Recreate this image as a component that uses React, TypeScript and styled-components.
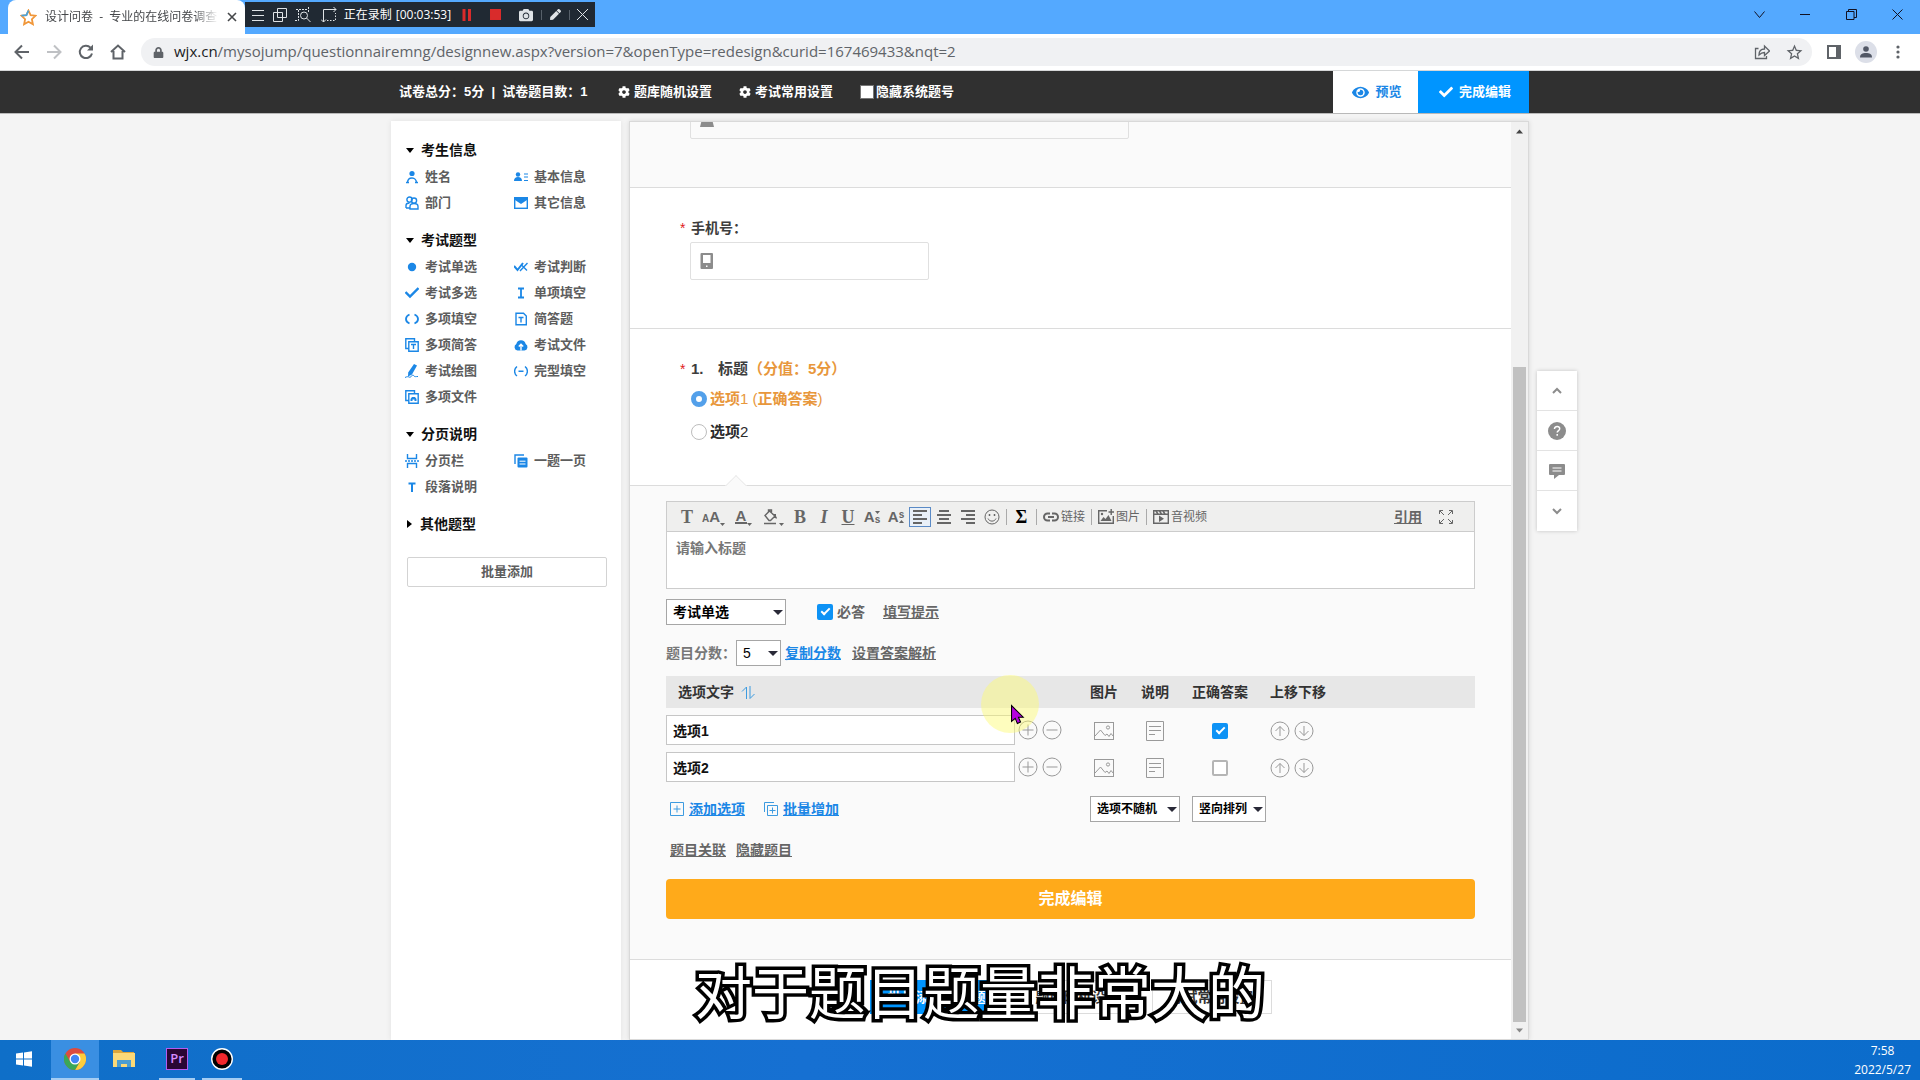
import React from "react";
import styled, { createGlobalStyle, css } from "styled-components";
import { FaCog, FaEye, FaCheck, FaCamera, FaLock, FaPen } from "react-icons/fa";
import { MdStarBorder } from "react-icons/md";

const CJK = `"Liberation Sans", "Noto Sans CJK SC", sans-serif`;
const UI = `"Open Sans", "Noto Sans CJK SC", sans-serif`;
const BLUE = "#1b87e6";

const Global = createGlobalStyle`
  *, *::before, *::after { box-sizing: border-box; }
  body { margin: 0; font: 14px/20px ${CJK}; color: #333; background: #f4f4f4; }
  button, input, select, textarea { font: inherit; color: inherit; margin: 0; }
  button { border: 0; background: none; padding: 0; cursor: pointer; }
  a { color: inherit; }
  svg { display: block; flex: none; }
`;

const Screen = styled.div`
  position: relative;
  display: flex;
  flex-direction: column;
  height: 100vh;
  overflow: hidden;
`;

/* ---------- browser frame ---------- */

const TabStrip = styled.header`
  display: flex;
  align-items: flex-start;
  height: 34px;
  padding-left: 8px;
  background: #54a9ff;
  font: 12px/16px ${UI};
`;
const Tab = styled.div`
  display: flex;
  align-items: center;
  gap: 8px;
  width: 237px;
  height: 34px;
  padding: 0 8px 0 12px;
  background: #fff;
  border-radius: 8px 8px 0 0;
  color: #45474a;
`;
const TabTitle = styled.span`
  flex: 1;
  overflow: hidden;
  white-space: pre;
  mask-image: linear-gradient(90deg, #000 85%, transparent);
`;
const IconButton = styled.button<{ $w?: number }>`
  display: flex;
  align-items: center;
  justify-content: center;
  width: ${(p) => p.$w ?? 32}px;
  height: 100%;
`;
const Recorder = styled.div`
  display: flex;
  align-items: center;
  width: 350px;
  height: 25px;
  margin-top: 2px;
  padding-left: 1px;
  background: #202933;
  color: #dfe3e6;
`;
const RecTime = styled.span`
  display: flex;
  gap: 4px;
  width: 112px;
  padding-left: 2px;
  white-space: nowrap;
  color: #fff;
`;
const RecSep = styled.i`
  width: 1px;
  height: 10px;
  background: #57606a;
`;
const WindowButtons = styled.div`
  display: flex;
  height: 28px;
  margin-left: auto;
`;
const AddressRow = styled.div`
  display: flex;
  align-items: center;
  height: 37px;
  padding: 0 6px;
  background: #fff;
  border-bottom: 1px solid #d5d7d8;
  color: #5f6368;
`;
const Pill = styled.div`
  display: flex;
  align-items: center;
  flex: 1;
  height: 28px;
  margin: 0 6px 0 7px;
  padding: 0 2px 0 12px;
  border-radius: 14px;
  background: #f0f1f3;
`;
const Url = styled.span`
  flex: 1;
  margin-left: 10px;
  padding-bottom: 2px;
  font: 15px/20px ${UI};
  color: #606469;
  b { font-weight: 400; color: #202124; }
`;
const Avatar = styled.span`
  display: flex;
  align-items: center;
  justify-content: center;
  width: 22px;
  height: 22px;
  border-radius: 50%;
  background: #dcdfe8;
`;

/* ---------- site header ---------- */

const Columns = styled.div`
  display: grid;
  grid-template-columns: 1fr minmax(0, 1138px) 1fr;
`;
const DarkBar = styled(Columns)`
  height: 43px;
  background: #303030;
  border-bottom: 1px solid #b9b9b9;
  color: #fff;
  font-size: 13px;
  font-weight: 700;
`;
const DarkInner = styled.div`
  grid-column: 2;
  display: flex;
  align-items: center;
  padding-left: 8px;
  white-space: nowrap;
`;
const Score = styled.span`
  width: 219px;
`;
const BarButton = styled.button`
  display: flex;
  align-items: center;
  gap: 4px;
  width: 121px;
`;
const HideNumber = styled.label`
  display: flex;
  align-items: center;
  gap: 2px;
  input {
    appearance: none;
    width: 14px;
    height: 14px;
    border: 1px solid #767676;
    background: #fff;
  }
`;
const BarAction = styled.button<{ $primary?: boolean }>`
  display: flex;
  align-items: center;
  justify-content: center;
  gap: 6px;
  align-self: stretch;
  width: ${(p) => (p.$primary ? 111 : 85)}px;
  padding-left: 3px;
  margin-left: ${(p) => (p.$primary ? 0 : "auto")};
  background: ${(p) => (p.$primary ? "#0095ff" : "#fff")};
  color: ${(p) => (p.$primary ? "#fff" : BLUE)};
`;

/* ---------- workspace ---------- */

const Workspace = styled(Columns)`
  flex: 1;
  min-height: 0;
  padding-top: 7px;
`;
const Center = styled.div`
  grid-column: 2;
  display: flex;
  gap: 8px;
  min-height: 0;
`;
const Sidebar = styled.aside`
  width: 230px;
  padding: 15px 14px;
  background: #fff;
  box-shadow: 0 0 6px rgba(0, 0, 0, 0.08);
  font-weight: 700;
`;
const Group = styled.section`
  margin-bottom: 10px;
`;
const GroupTitle = styled.h3<{ $closed?: boolean }>`
  display: flex;
  align-items: center;
  gap: 6px;
  margin: 0;
  font-size: 14px;
  line-height: 28px;
  color: #111;
  &::before {
    content: "";
    margin: 0 1px;
    border: 4px solid transparent;
    ${(p) =>
      p.$closed
        ? css`border-left: 5px solid #000; border-right: 0; margin: 0 2px;`
        : css`border-top: 5px solid #000; border-bottom: 0;`}
  }
`;
const ItemGrid = styled.div`
  display: grid;
  grid-template-columns: 109px 1fr;
`;
const Item = styled.button`
  display: flex;
  align-items: center;
  gap: 6px;
  font-size: 13px;
  line-height: 26px;
  color: #5d5d5d;
`;
const BatchButton = styled.button`
  width: 200px;
  height: 30px;
  margin: 9px 0 0 2px;
  border: 1px solid #d3d3d3;
  border-radius: 2px;
  background: #fff;
  font-size: 13px;
  color: #5d5d5d;
`;

const Pane = styled.main`
  display: flex;
  flex: 1;
  min-width: 0;
  border: 1px solid #d9d9d9;
  box-shadow: 0 0 5px rgba(0, 0, 0, 0.12);
  background: #fff;
`;
const PaneBody = styled.div`
  display: flex;
  flex-direction: column;
  flex: 1;
  min-width: 0;
  overflow: hidden;
`;
const Scrollbar = styled.div`
  display: flex;
  flex-direction: column;
  align-items: center;
  width: 17px;
  padding: 6px 0 5px;
  background: #f1f1f1;
`;
const Thumb = styled.div`
  width: 13px;
  height: 655px;
  margin: auto 0 5px;
  background: #c1c1c1;
`;

const Block = styled.section`
  position: relative;
  flex: none;
  padding: 30px 60px 48px;
  border-bottom: 1px solid #dcdcdc;
`;
const CutBlock = styled(Block)`
  display: flex;
  align-items: flex-end;
  height: 66px;
  padding-top: 0;
  overflow: hidden;
  background: #fafafa;
`;
const QuestionBlock = styled(Block)`
  padding-bottom: 37px;
  &::after {
    content: "";
    position: absolute;
    left: 98px;
    bottom: -9px;
    width: 16px;
    height: 16px;
    border: 1px solid #e8e8e8;
    border-right: 0;
    border-bottom: 0;
    background: #fafafa;
    transform: rotate(45deg);
    clip-path: polygon(0 0, 100% 0, 0 100%);
  }
`;
const QTitle = styled.label`
  display: flex;
  margin-left: -10px;
  font-weight: 700;
  line-height: 20px;
  color: #3d3d3d;
`;
const QHeading = styled(QTitle)`
  font-size: 15px;
`;
const Star = styled.span`
  width: 11px;
  font-size: 14px;
  font-weight: 400;
  color: #e02020;
`;
const Num = styled.span`
  width: 27px;
`;
const Points = styled.span`
  color: #e8973c;
`;
const Field = styled.div<{ $w: number }>`
  display: flex;
  flex: none;
  align-items: center;
  width: ${(p) => p.$w}px;
  height: 38px;
  padding-left: 8px;
  border: 1px solid #e0e0e0;
  border-radius: 2px;
  input { flex: 1; min-width: 0; border: 0; outline: 0; background: none; }
`;
const PhoneField = styled(Field)`
  margin-top: 4px;
`;
const OptionList = styled.div`
  margin: 3px 0 0 1px;
`;
const Option = styled.label<{ $right?: boolean }>`
  display: flex;
  align-items: center;
  gap: 3px;
  height: 33px;
  font-size: 15px;
  font-weight: 700;
  white-space: pre;
  color: ${(p) => (p.$right ? "#e8973c" : "#2b2b2b")};
  i { font-style: normal; font-weight: 400; }
  input {
    appearance: none;
    width: 16px;
    height: 16px;
    border-radius: 50%;
    border: 1px solid #bdbdbd;
    background: #fff;
  }
  input:checked { border: 5px solid #53a0ea; }
`;

/* ---------- question editor ---------- */

const Editor = styled(Block)`
  display: flex;
  flex-direction: column;
  padding: 15px 36px 40px;
  background: #fafafa;
`;
const RichText = styled.div`
  border: 1px solid #ccc;
  background: #fff;
`;
const Tools = styled.div`
  display: flex;
  align-items: center;
  height: 30px;
  padding-left: 8px;
  background: #efefee;
  border-bottom: 1px solid #ccc;
  font-size: 12px;
  color: #666;
`;
const Tool = styled.button<{ $w?: number; $on?: boolean }>`
  display: flex;
  align-items: center;
  justify-content: center;
  width: ${(p) => p.$w ?? 24}px;
  height: 20px;
  ${(p) => p.$on && css`width: 22px; margin: 0 1px; border: 1px solid #5a8ac6; background: #e9f0f8;`}
`;
const Serif = styled.span<{ $italic?: boolean; $under?: boolean; $dark?: boolean }>`
  font: 700 18px/18px "Liberation Serif", serif;
  font-style: ${(p) => (p.$italic ? "italic" : "normal")};
  text-decoration: ${(p) => (p.$under ? "underline" : "none")};
  color: ${(p) => (p.$dark ? "#000" : "#666")};
`;
const ColorLetter = styled.span`
  width: 12px;
  border-bottom: 2px solid #666;
  font: 700 15px/13px "Liberation Sans", sans-serif;
  text-align: center;
`;
const Big = styled.span`
  font: 700 15px/18px "Liberation Sans", sans-serif;
`;
const Small = styled.span`
  font: 700 10px/9px "Liberation Sans", sans-serif;
`;
const SmallStack = styled.span<{ $up?: boolean }>`
  display: flex;
  flex-direction: ${(p) => (p.$up ? "column-reverse" : "column")};
  align-items: center;
`;
const BaseLetters = styled.span`
  display: flex;
  align-items: baseline;
`;
const ToolLabel = styled.button`
  display: flex;
  align-items: center;
  gap: 2px;
  padding: 0 4px;
  white-space: nowrap;
`;
const Sep = styled.i`
  width: 1px;
  height: 16px;
  margin: 0 2px;
  background: #aaa;
`;
const Quote = styled.a`
  margin: 0 12px 0 auto;
  font-size: 14px;
  font-weight: 700;
  text-decoration: underline;
`;
const TitleArea = styled.textarea`
  display: block;
  width: 100%;
  height: 56px;
  padding: 6px 9px;
  border: 0;
  outline: 0;
  resize: none;
  font-weight: 700;
  &::placeholder { color: #777; opacity: 1; }
`;
const Row = styled.div<{ $top: number; $h: number }>`
  display: flex;
  align-items: center;
  height: ${(p) => p.$h}px;
  margin-top: ${(p) => p.$top}px;
  color: #666;
  white-space: nowrap;
`;
const SelectBox = styled.span<{ $w: number; $small?: boolean }>`
  position: relative;
  display: inline-block;
  width: ${(p) => p.$w}px;
  font-size: ${(p) => (p.$small ? 12 : 14)}px;
  color: #000;
  select {
    appearance: none;
    width: 100%;
    height: 26px;
    padding: 0 6px;
    border: 1px solid #a6a6a6;
    border-radius: 0;
    background: #fff;
    font-weight: 700;
  }
  &::after {
    content: "";
    position: absolute;
    right: 3px;
    top: 11px;
    border: 5px solid transparent;
    border-top-color: #2a2a38;
    border-bottom: 0;
    pointer-events: none;
  }
`;
const ScoreSelect = styled(SelectBox)`
  margin-right: 4px;
  select { font-weight: 400; }
`;
const Tick = styled.input.attrs({ type: "checkbox" })`
  appearance: none;
  display: inline-flex;
  align-items: center;
  justify-content: center;
  width: 16px;
  height: 16px;
  border: 2px solid #b5b5b5;
  border-radius: 2px;
  background: #fff;
  &:checked { border-color: #0d92f5; background: #0d92f5; }
  &:checked::after {
    content: "";
    width: 9px;
    height: 5px;
    margin-bottom: 3px;
    border: solid #fff;
    border-width: 0 0 2px 2px;
    transform: rotate(-45deg);
  }
`;
const Required = styled.label`
  display: flex;
  align-items: center;
  gap: 4px;
  margin: 0 18px 0 31px;
  font-weight: 700;
`;
const Link = styled.a<{ $blue?: boolean }>`
  font-weight: 700;
  text-decoration: underline;
  color: ${(p) => (p.$blue ? BLUE : "#666")};
`;
const PlainLabel = styled.label`
  font-weight: 700;
  color: #777;
`;
const Table = styled.table`
  width: 100%;
  margin-top: 10px;
  border-collapse: collapse;
  table-layout: fixed;
  th {
    height: 32px;
    padding: 0;
    background: #e7e7e7;
    text-align: center;
    color: #333;
    white-space: nowrap;
  }
  th:first-child { padding-left: 12px; }
  th:first-child, th:last-child, td:last-child { text-align: left; }
  th:last-child, td:last-child { padding-left: 11px; }
  td { height: 37px; padding: 8px 0 0; }
  td:first-child { padding-top: 7px; }
`;
const Col = styled.col<{ $w?: number }>`
  width: ${(p) => (p.$w ? p.$w + "px" : "auto")};
`;
const Flex = styled.div<{ $gap: number; $center?: boolean }>`
  display: flex;
  align-items: center;
  gap: ${(p) => p.$gap}px;
  justify-content: ${(p) => (p.$center ? "center" : "flex-start")};
  color: #999;
`;
const HeadText = styled(Flex)`
  color: #333;
`;
const OptionInput = styled.input`
  width: 349px;
  height: 30px;
  padding: 0 6px;
  border: 1px solid #c6c6c6;
  background: #fff;
  font-weight: 700;
  color: #111;
`;
const AddLink = styled(Link)`
  display: flex;
  align-items: center;
  gap: 5px;
  margin: 0 15px 0 4px;
`;
const Arrange = styled.div`
  display: flex;
  gap: 12px;
  margin: 0 209px 0 auto;
`;
const DoneButton = styled.button`
  height: 40px;
  margin-top: 18px;
  border-radius: 4px;
  background: #ffaa1a;
  font-size: 16px;
  font-weight: 700;
  color: #fff;
`;
const Footer = styled.div`
  display: flex;
  justify-content: center;
  gap: 14px;
  padding-top: 20px;
`;
const FooterButton = styled.button<{ $primary?: boolean }>`
  height: 34px;
  padding: 0 17px;
  border: 1px solid ${(p) => (p.$primary ? "#0095ff" : "#dcdcdc")};
  background: ${(p) => (p.$primary ? "#0095ff" : "#fff")};
  font-weight: 700;
  color: ${(p) => (p.$primary ? "#fff" : "#333")};
`;

const SideTools = styled.nav`
  display: flex;
  flex-direction: column;
  align-self: start;
  width: 40px;
  margin: 250px 0 0 8px;
  background: #fff;
  box-shadow: 0 0 4px rgba(0, 0, 0, 0.2);
  button {
    display: flex;
    align-items: center;
    justify-content: center;
    height: 40px;
    border-bottom: 1px solid #e3e3e3;
    color: #8c8c8c;
  }
  button:last-child { border-bottom: 0; }
`;

/* ---------- taskbar and overlays ---------- */

const Taskbar = styled.footer`
  display: flex;
  height: 40px;
  padding-left: 1px;
  background: linear-gradient(90deg, #0f6fc8, #1670d2 42%, #0b6ccb);
`;
const Task = styled.button<{ $w: number; $line?: boolean; $active?: boolean }>`
  display: flex;
  align-items: center;
  justify-content: center;
  width: ${(p) => p.$w}px;
  background: ${(p) => (p.$active ? "#3a8fe2" : "none")};
  border-bottom: 2px solid ${(p) => (p.$line ? "#a5cdf3" : "transparent")};
`;
const Space = styled.span<{ $w: number }>`
  width: ${(p) => p.$w}px;
`;
const Premiere = styled.span`
  width: 22px;
  height: 22px;
  border: 1px solid #b45cf0;
  background: #2a0634;
  font: 600 13px/19px "Open Sans", sans-serif;
  text-align: center;
  color: #d58cff;
`;
const Clock = styled.time`
  margin-left: auto;
  padding: 1px 9px 0 0;
  font: 12px/19px ${UI};
  text-align: center;
  color: #fff;
`;
const Caption = styled.p`
  position: absolute;
  left: 40px;
  right: 0;
  bottom: 51px;
  margin: 0;
  font: 400 57px/80px "Noto Sans CJK SC", sans-serif;
  text-align: center;
  white-space: nowrap;
  color: #fff;
  -webkit-text-stroke: 7px #000;
  paint-order: stroke fill;
  stroke-linejoin: round;
  pointer-events: none;
`;
const Pointer = styled.div`
  position: absolute;
  left: calc(50% + 21px);
  top: 675px;
  width: 58px;
  height: 58px;
  padding: 30px 0 0 30px;
  border-radius: 50%;
  background: rgba(252, 250, 110, 0.45);
  pointer-events: none;
  svg { overflow: visible; }
`;

/* ---------- drawings ---------- */

type IcProps = { size?: number; sw?: number; color?: string; box?: number; children: React.ReactNode };
const Ic = ({ size = 16, sw = 1, color = "currentColor", box = 16, children }: IcProps) => (
  <svg width={size} height={size} viewBox={`0 0 ${box} ${box}`} fill="none" stroke={color} strokeWidth={sw}>
    {children}
  </svg>
);
const S = ({ children }: { children: React.ReactNode }) => (
  <Ic size={14} box={14} sw={1.4} color={BLUE}>{children}</Ic>
);

const icons: Record<string, React.ReactNode> = {
  name: <S><circle cx="7" cy="3.5" r="2.6" fill={BLUE} stroke="none" /><path d="M2.500 13c0-3 1.800-5 4.500-5s4.500 2 4.500 5M1 12.500h3M10 12.500h3" /></S>,
  dept: <S><circle cx="4.5" cy="3.6" r="2.6" /><circle cx="9" cy="4.600" r="2.600" /><path d="M1 12V9.500C1 8 2.500 7 4.500 7M5 13v-2.500c0-2 1.500-3 4-3s4 1 4 3V13zM1 12h4" /></S>,
  basic: <S><circle cx="4" cy="4.500" r="2.200" fill={BLUE} stroke="none" /><path d="M0 11c0-2.500 1.500-4 4-4s4 1.500 4 4z" fill={BLUE} stroke="none" /><path d="M10 4h4M10 7h4M10 10.500h4" strokeWidth="1" /></S>,
  mail: <S><rect x=".7" y="1.700" width="12.600" height="10.600" /><path d="M1 2h12v2L7 8 1 4z" fill={BLUE} stroke="none" /></S>,
  dot: <S><circle cx="7" cy="7" r="4.200" fill={BLUE} stroke="none" /></S>,
  judge: <S><path d="M0 6l3.500 4L9 3" strokeWidth="2" /><path d="M6 11l7.500-8M7.500 5l5.500 5.500" strokeWidth="1.400" /></S>,
  check: <S><path d="M.5 6L5 10.500 13.500 2" strokeWidth="2.400" /></S>,
  caret: <S><path d="M4 2.500h6M4 11.500h6M7 2.500v9" strokeWidth="1.800" /></S>,
  parens: <S><path d="M4.500 2.500C-.2 4.500-.2 9.500 4.500 11.500M9.500 2.500C14.200 4.500 14.200 9.500 9.500 11.500" strokeWidth="1.800" /></S>,
  page: <S><path d="M2 1.200h7.500L12.300 4v8.800H2z" /><path d="M4.500 5.500h5M7 5.500v5" /></S>,
  pages: <S><path d="M3.500 10.500H.8V.8h8.700v2.500M3.800 3.800h9.400v9.400H3.800z" /><path d="M6 6.500h5M8.500 6.500v4.500" /></S>,
  cloud: <S><path d="M3.500 12.500A3.500 3.500 0 0 1 2.300 6a4.800 4.800 0 0 1 9.400 0 3.500 3.500 0 0 1-1.200 6.500z" fill={BLUE} stroke="none" /><path d="M7 12.500V7M4.800 8.500L7 6.300l2.200 2.200" stroke="#fff" /></S>,
  draw: <S><path d="M9 0l3 1.500L7 10.500 3 12.500 3.200 8.500z" fill={BLUE} stroke="none" /><path d="M0 13.500c2-1 3-1 4-.5s1.500.5 2.500-1 2-1 2.500 0 2 .5 4 .5" strokeWidth="1" /></S>,
  cloze: <S><path d="M3 2.500C-.2 5-.2 9.500 3 12M11 2.500C14.200 5 14.200 9.500 11 12M4.500 7.200h5" /></S>,
  files: <S><path d="M3.500 10.500H.8V.8h8.700v2.500M3.800 3.800h9.400v9.400H3.800z" /><path d="M5.500 11V9l1.500-2h3l1.500 2v2h-2V9.500h-2V11z" fill={BLUE} stroke="none" /></S>,
  break: <S><path d="M2.500 0v4.500h9V0M2.500 14V9.500h9V14" /><path d="M0 7h14" strokeDasharray="2 1" /></S>,
  single: <S><path d="M1 10V1h9" /><rect x="3.500" y="3.500" width="10" height="10" rx="1" fill={BLUE} stroke="none" /><path d="M5.500 7.200h6M5.500 10h6" stroke="#fff" strokeWidth="1" /></S>,
  text: <S><path d="M3.500 3.500h7M7 3.500V12" strokeWidth="2" /></S>,
};

const groups = [
  { title: "考生信息", items: [["name", "姓名"], ["basic", "基本信息"], ["dept", "部门"], ["mail", "其它信息"]] },
  {
    title: "考试题型",
    items: [
      ["dot", "考试单选"], ["judge", "考试判断"], ["check", "考试多选"], ["caret", "单项填空"],
      ["parens", "多项填空"], ["page", "简答题"], ["pages", "多项简答"], ["cloud", "考试文件"],
      ["draw", "考试绘图"], ["cloze", "完型填空"], ["files", "多项文件"],
    ],
  },
  { title: "分页说明", items: [["break", "分页栏"], ["single", "一题一页"], ["text", "段落说明"]] },
];

const Circle = ({ d, label }: { d: string; label: string }) => (
  <button aria-label={label}>
    <Ic size={20} box={20}><circle cx="10" cy="10" r="9" /><path d={d} /></Ic>
  </button>
);
const Caret = ({ up }: { up?: boolean }) => (
  <Ic size={5} box={5}><path d={up ? "M0 4h5L2.500 1z" : "M0 1h5L2.500 4z"} fill="currentColor" stroke="none" /></Ic>
);
const LowCaret = styled.span`
  align-self: flex-end;
`;
const Lines = ({ d }: { d: string }) => <Ic sw={2}><path d={d} /></Ic>;

const OptionRow = ({ text, right }: { text: string; right?: boolean }) => (
  <tr>
    <td>
      <Flex $gap={3}>
        <OptionInput aria-label="选项文字" defaultValue={text} />
        <Flex $gap={4}>
          <Circle label="添加" d="M4.500 10h11M10 4.500v11" />
          <Circle label="删除" d="M4.500 10h11" />
        </Flex>
      </Flex>
    </td>
    <td>
      <Flex $gap={0} $center>
        <button aria-label="图片">
          <Ic size={20} box={20}><rect x=".5" y="1.500" width="19" height="17" /><path d="M1 15l5.500-6 4.500 5.500 2-1.500 2 2.500 2-3 2.500 3" /><circle cx="14" cy="6.500" r="1.600" /></Ic>
        </button>
      </Flex>
    </td>
    <td>
      <Flex $gap={0} $center>
        <button aria-label="说明">
          <Ic size={20} box={20}><path d="M1.500.5h17v19h-17zM4 5.500h12M4 9.500h12M4 13.500h6" /></Ic>
        </button>
      </Flex>
    </td>
    <td>
      <Flex $gap={0} $center><Tick aria-label="正确答案" defaultChecked={right} /></Flex>
    </td>
    <td>
      <Flex $gap={4}>
        <Circle label="上移" d="M10 15V5.500M5.500 10L10 5.500l4.500 4.500" />
        <Circle label="下移" d="M10 5v9.500M5.500 10l4.500 4.500 4.500-4.500" />
      </Flex>
    </td>
  </tr>
);

const BrowserFrame = () => (
  <>
    <TabStrip>
      <Tab>
        <Ic size={17} box={17} sw={1.8} color="#f0973a">
          <path d="M8.500 1.500l2.100 4.600 5 .6-3.700 3.500 1 5-4.400-2.500-4.400 2.500 1-5L1.400 6.700l5-.6z" />
          <path d="M8.500 1.500L6.400 6.100l-5 .6" stroke="#4aa3dc" />
        </Ic>
        <TabTitle>{"设计问卷  -  专业的在线问卷调查"}</TabTitle>
        <IconButton $w={10} aria-label="关闭标签页"><Ic size={10} box={10} sw={1.6}><path d="M1 1l8 8M9 1L1 9" /></Ic></IconButton>
      </Tab>
      <Recorder>
        <IconButton $w={24} aria-label="菜单"><Ic size={12} box={12}><path d="M0 1.500h12M0 6.500h12M0 11.500h12" /></Ic></IconButton>
        <IconButton $w={21} aria-label="窗口"><Ic size={14} box={14}><path d="M4.500.5h9v9h-9zM.5 4.500h9v9h-9z" /></Ic></IconButton>
        <IconButton $w={25} aria-label="缩放"><Ic><path d="M1 2.500h12M3.500 3v10.500H0M13.500 0v5" strokeDasharray="2 1" /><circle cx="9" cy="8.500" r="3.500" /><path d="M11.500 11l4 4" /></Ic></IconButton>
        <IconButton $w={26} aria-label="区域"><Ic><path d="M2.500 15V2.500H15M0 12.500L2.500 15 5 12.500M12.500 0L15 2.500 12.500 5" /><path d="M6 13.500h8.500V6" strokeDasharray="1.500 1.500" /></Ic></IconButton>
        <RecTime><span>正在录制</span><span>[00:03:53]</span></RecTime>
        <IconButton $w={27} aria-label="暂停"><Ic size={12} box={12} sw={3} color="#d92b2b"><path d="M3 0v12M8.500 0v12" /></Ic></IconButton>
        <IconButton $w={30} aria-label="停止"><Ic size={11} box={11} color="#d92b2b"><path d="M0 0h11v11H0z" fill="#d92b2b" /></Ic></IconButton>
        <IconButton $w={31} aria-label="截图"><FaCamera size={14} /></IconButton>
        <RecSep />
        <IconButton $w={27} aria-label="画笔"><FaPen size={11} /></IconButton>
        <RecSep />
        <IconButton $w={25} aria-label="关闭"><Ic size={11} box={11}><path d="M0 0l11 11M11 0L0 11" /></Ic></IconButton>
      </Recorder>
      <WindowButtons>
        <IconButton $w={46} aria-label="搜索标签页"><Ic size={11} box={11} color="#112"><path d="M.5 2.500l5 6 5-6" /></Ic></IconButton>
        <IconButton $w={46} aria-label="最小化"><Ic size={10} box={10} color="#112"><path d="M0 5.500h10" /></Ic></IconButton>
        <IconButton $w={46} aria-label="还原"><Ic size={11} box={11} color="#112"><path d="M.5 2.500h7.500v8H.5zM2.500 2.500V.5h8v8H8" /></Ic></IconButton>
        <IconButton $w={46} aria-label="关闭窗口"><Ic size={11} box={11} color="#112"><path d="M.5.5l10 10M10.500.5l-10 10" /></Ic></IconButton>
      </WindowButtons>
    </TabStrip>
    <AddressRow>
      <IconButton aria-label="后退"><Ic sw={2}><path d="M15 8H2M8 1.500L1.500 8 8 14.500" /></Ic></IconButton>
      <IconButton aria-label="前进"><Ic sw={2} color="#bfc1c4"><path d="M1 8h13M8 1.500L14.500 8 8 14.500" /></Ic></IconButton>
      <IconButton aria-label="刷新"><Ic sw={2}><path d="M14 9.500A6.200 6.200 0 1 1 12.500 3.600" /><path d="M9 6.500h6v-6z" fill="currentColor" stroke="none" /></Ic></IconButton>
      <IconButton aria-label="主页"><Ic sw={2}><path d="M1 8l7-6.500L15 8M3.500 7v7.500h9V7" /></Ic></IconButton>
      <Pill>
        <FaLock size={11} />
        <Url><b>wjx.cn</b>/mysojump/questionnairemng/designnew.aspx?version=7&amp;openType=redesign&amp;curid=167469433&amp;nqt=2</Url>
        <IconButton aria-label="分享"><Ic sw={1.3}><path d="M4.500 4.500H1.500v10h11V12M5 11c0-4 2-6 5.500-6V2l5 5-5 4.500V8.500C8 8.500 6.500 9.500 5 11z" /></Ic></IconButton>
        <IconButton aria-label="收藏"><MdStarBorder size={19} /></IconButton>
      </Pill>
      <IconButton aria-label="侧边栏"><Ic size={14} box={14} sw={2}><path d="M1 1h12v12H1z" /><path d="M9 1h4v12H9z" fill="currentColor" stroke="none" /></Ic></IconButton>
      <IconButton aria-label="用户">
        <Avatar><Ic size={12} box={12}><circle cx="6" cy="3" r="2.800" fill="#525866" stroke="none" /><path d="M0 11.500C0 8 2.500 7 6 7s6 1 6 4.500z" fill="#525866" stroke="none" /></Ic></Avatar>
      </IconButton>
      <IconButton aria-label="更多"><Ic><g fill="currentColor" stroke="none"><circle cx="8" cy="3" r="1.600" /><circle cx="8" cy="8" r="1.600" /><circle cx="8" cy="13" r="1.600" /></g></Ic></IconButton>
    </AddressRow>
  </>
);

const ToolRow = () => (
  <Tools>
    <Tool aria-label="标题"><Serif>T</Serif></Tool>
    <Tool $w={29} aria-label="字号"><BaseLetters><Small>A</Small><Big>A</Big></BaseLetters><LowCaret><Caret /></LowCaret></Tool>
    <Tool $w={31} aria-label="文字颜色"><ColorLetter>A</ColorLetter><LowCaret><Caret /></LowCaret></Tool>
    <Tool $w={29} aria-label="背景颜色">
      <Ic sw={1.4}><path d="M5.500 4V1h3v3M2 6.500L6.500 2l5.500 5-4.500 4.500H6zM12 6.500l1.500 3M1 14.500h12" /><path d="M9 5h4v4l-1.500-2z" fill="currentColor" stroke="none" /></Ic>
      <LowCaret><Caret /></LowCaret>
    </Tool>
    <Tool aria-label="加粗"><Serif>B</Serif></Tool>
    <Tool aria-label="斜体"><Serif $italic>I</Serif></Tool>
    <Tool aria-label="下划线"><Serif $under>U</Serif></Tool>
    <Tool aria-label="减小字号"><Big>A</Big><SmallStack><Caret /><Small>s</Small></SmallStack></Tool>
    <Tool aria-label="增大字号"><Big>A</Big><SmallStack $up><Caret up /><Small>s</Small></SmallStack></Tool>
    <Tool $on aria-label="左对齐"><Lines d="M1 2h14M1 6h9M1 10h14M1 14h9" /></Tool>
    <Tool aria-label="居中"><Lines d="M3 2h10M1 6h14M3 10h10M1 14h14" /></Tool>
    <Tool aria-label="右对齐"><Lines d="M1 2h14M6 6h9M1 10h14M6 14h9" /></Tool>
    <Tool aria-label="表情"><Ic><circle cx="8" cy="8" r="7" /><path d="M4 9.500c1.500 3.500 6.500 3.500 8 0" /><path d="M5.500 5v2M10.500 5v2" strokeWidth="1.500" /></Ic></Tool>
    <Sep />
    <Tool $w={25} aria-label="公式"><Serif $dark>Σ</Serif></Tool>
    <Sep />
    <ToolLabel><Ic sw={2}><path d="M7 4.500H4.500a3.500 3.500 0 0 0 0 7H7M9 4.500h2.500a3.500 3.500 0 0 1 0 7H9M5 8h6" /></Ic>链接</ToolLabel>
    <Sep />
    <ToolLabel><Ic sw={1.4}><path d="M9 1.700H.7v12.600h14.600V7M10.500 3H16M13.200 0v6" /><path d="M2.500 12l3-4 2 2 3-4 3 6z" fill="currentColor" stroke="none" /><circle cx="4" cy="5" r="1.200" fill="currentColor" stroke="none" /></Ic>图片</ToolLabel>
    <Sep />
    <ToolLabel><Ic sw={1.4}><path d="M.7 1.700h14.600v12.600H.7zM1 5.300h14M3 2l2 3M6.500 2l2 3M10 2l2 3" /><path d="M6 6.500l5 3.200-5 3.200z" fill="currentColor" stroke="none" /></Ic>音视频</ToolLabel>
    <Quote href="#quote">引用</Quote>
    <Tool aria-label="全屏"><Ic><path d="M1.500 5V1.500H5M2 2l4 4M11 1.500h3.500V5M14 2l-4 4M1.500 11v3.500H5M2 14l4-4M11 14.500h3.500V11M14 14l-4-4" /></Ic></Tool>
    <Space $w={16} />
  </Tools>
);

export default function App() {
  return (
    <Screen>
      <Global />
      <BrowserFrame />
      <DarkBar>
        <DarkInner>
          <Score>试卷总分：5分&nbsp; | &nbsp;试卷题目数：1</Score>
          <BarButton><FaCog size={12} />题库随机设置</BarButton>
          <BarButton><FaCog size={12} />考试常用设置</BarButton>
          <HideNumber><input type="checkbox" />隐藏系统题号</HideNumber>
          <BarAction><FaEye size={17} />预览</BarAction>
          <BarAction $primary><FaCheck size={14} />完成编辑</BarAction>
        </DarkInner>
      </DarkBar>

      <Workspace>
        <Center>
          <Sidebar>
            {groups.map((g) => (
              <Group key={g.title}>
                <GroupTitle>{g.title}</GroupTitle>
                <ItemGrid>
                  {g.items.map(([icon, label]) => (
                    <Item key={label}>{icons[icon]}{label}</Item>
                  ))}
                </ItemGrid>
              </Group>
            ))}
            <Group><GroupTitle $closed>其他题型</GroupTitle></Group>
            <BatchButton>批量添加</BatchButton>
          </Sidebar>

          <Pane>
            <PaneBody>
              <CutBlock>
                <Field $w={439}>
                  <Ic color="#8c8c8c"><circle cx="8" cy="3" r="3" fill="#8c8c8c" stroke="none" /><path d="M1 15l2-8h10l2 8z" fill="#8c8c8c" stroke="none" /></Ic>
                  <input aria-label="姓名" />
                </Field>
              </CutBlock>
              <Block>
                <QTitle htmlFor="phone"><Star>*</Star>手机号：</QTitle>
                <PhoneField $w={239}>
                  <Ic color="#8c8c8c"><path fillRule="evenodd" d="M2.500 0h10.500a1 1 0 0 1 1 1v14a1 1 0 0 1-1 1H2.500a1 1 0 0 1-1-1V1a1 1 0 0 1 1-1zM4 2v8h7.500V2zM7 12.500v1.500h1.500v-1.500z" fill="#8c8c8c" stroke="none" /></Ic>
                  <input id="phone" />
                </PhoneField>
              </Block>
              <QuestionBlock>
                <QHeading as="div"><Star>*</Star><Num>1.</Num>标题<Points>（分值：5分）</Points></QHeading>
                <OptionList>
                  <Option $right><input type="radio" name="q1" defaultChecked /><span>选项<i>1 (</i>正确答案<i>)</i></span></Option>
                  <Option><input type="radio" name="q1" /><span>选项<i>2</i></span></Option>
                </OptionList>
              </QuestionBlock>

              <Editor>
                <RichText>
                  <ToolRow />
                  <TitleArea aria-label="标题" placeholder="请输入标题" />
                </RichText>
                <Row $top={10} $h={26}>
                  <SelectBox $w={120}><select aria-label="题型"><option>考试单选</option></select></SelectBox>
                  <Required><Tick defaultChecked />必答</Required>
                  <Link href="#hint">填写提示</Link>
                </Row>
                <Row $top={15} $h={26}>
                  <PlainLabel htmlFor="score">题目分数：</PlainLabel>
                  <ScoreSelect $w={45}><select id="score"><option>5</option></select></ScoreSelect>
                  <Flex $gap={11}>
                    <Link $blue href="#copy">复制分数</Link>
                    <Link href="#explain">设置答案解析</Link>
                  </Flex>
                </Row>
                <Table>
                  <colgroup><Col /><Col $w={50} /><Col $w={52} /><Col $w={78} /><Col $w={216} /></colgroup>
                  <thead>
                    <tr>
                      <th>
                        <HeadText $gap={7}>
                          选项文字
                          <Ic size={15} box={15} color="#3d9be0"><path d="M1 6.500L5.500 2v12M9 1v12.500L13.500 9" /></Ic>
                        </HeadText>
                      </th>
                      <th>图片</th><th>说明</th><th>正确答案</th><th>上移下移</th>
                    </tr>
                  </thead>
                  <tbody>
                    <OptionRow text="选项1" right />
                    <OptionRow text="选项2" />
                  </tbody>
                </Table>
                <Row $top={14} $h={26}>
                  <AddLink $blue href="#add"><Ic size={14} box={14} color="#3d9be0"><path d="M.5.5h13v13H.5zM3.500 7h7M7 3.500v7" /></Ic>添加选项</AddLink>
                  <AddLink $blue href="#batch"><Ic size={14} box={14} color="#3d9be0"><path d="M.5 10V.5H10M3.500 3.500h10v10h-10zM5.500 8.500h6M8.500 5.500v6" /></Ic>批量增加</AddLink>
                  <Arrange>
                    <SelectBox $w={90} $small><select aria-label="选项随机"><option>选项不随机</option></select></SelectBox>
                    <SelectBox $w={74} $small><select aria-label="排列方式"><option>竖向排列</option></select></SelectBox>
                  </Arrange>
                </Row>
                <Row $top={17} $h={22}>
                  <Space $w={4} />
                  <Flex $gap={10}>
                    <Link href="#relate">题目关联</Link>
                    <Link href="#hide">隐藏题目</Link>
                  </Flex>
                </Row>
                <DoneButton>完成编辑</DoneButton>
              </Editor>
              <Footer>
                <FooterButton $primary>批量添加考试题</FooterButton>
                <FooterButton>题库随机设置</FooterButton>
                <FooterButton>考试常用设置</FooterButton>
              </Footer>
            </PaneBody>
            <Scrollbar>
              <Ic size={7} box={7}><path d="M0 5.500h7L3.500 1.500z" fill="#444" stroke="none" /></Ic>
              <Thumb />
              <Ic size={7} box={7}><path d="M0 1.500h7L3.500 5.500z" fill="#888" stroke="none" /></Ic>
            </Scrollbar>
          </Pane>
        </Center>
        <SideTools>
          <button aria-label="上一题"><Ic size={10} box={10} sw={2}><path d="M1 7l4-4 4 4" /></Ic></button>
          <button aria-label="帮助">
            <Ic size={18} box={18}><circle cx="9" cy="9" r="9" fill="currentColor" stroke="none" /><path d="M6.500 7c0-3.500 5.500-3.200 5.200 0-.2 1.600-2.500 1.700-2.500 3.600M9.200 12v1.800" stroke="#fff" strokeWidth="1.500" /></Ic>
          </button>
          <button aria-label="留言">
            <Ic size={16}><path d="M1 1h14a1 1 0 0 1 1 1v9a1 1 0 0 1-1 1h-5l-5 4v-4H1a1 1 0 0 1-1-1V2a1 1 0 0 1 1-1z" fill="currentColor" stroke="none" /><path d="M3.500 5h9M3.500 8h9" stroke="#fff" /></Ic>
          </button>
          <button aria-label="下一题"><Ic size={10} box={10} sw={2}><path d="M1 3l4 4 4-4" /></Ic></button>
        </SideTools>
      </Workspace>

      <Taskbar>
        <Task $w={46} aria-label="开始"><Ic><path d="M0 2.500L7 1.500v6H0zM8 1.400L16 .2v7.300H8zM0 8.500h7v6l-7-1zM8 8.500h8v7.300l-8-1.200z" fill="#fff" stroke="none" /></Ic></Task>
        <Space $w={4} />
        <Task $w={48} $line $active aria-label="Chrome">
          <Ic size={22} box={22}>
            <g stroke="none">
              <circle cx="11" cy="11" r="11" fill="#dd4b3e" />
              <path d="M11 5.500h9.530A11 11 0 0 1 11 22l4.800-8.300z" fill="#fccd3d" />
              <path d="M1.470 5.500A11 11 0 0 0 11 22l4.800-8.300L6.200 13.700z" fill="#3aa757" />
              <circle cx="11" cy="11" r="5.500" fill="#fff" />
              <circle cx="11" cy="11" r="4.200" fill="#4285f4" />
            </g>
          </Ic>
        </Task>
        <Task $w={50} aria-label="文件资源管理器">
          <Ic size={22} box={22}>
            <g stroke="none">
              <path d="M0 2h8l2 2h11v5H0z" fill="#dca63c" />
              <path d="M0 5h22v14H0z" fill="#fbd978" />
              <path d="M4 19v-7h14v7h-4v-3H8v3z" fill="#4b9dd2" />
            </g>
          </Ic>
        </Task>
        <Space $w={10} />
        <Task $w={36} $line aria-label="Premiere"><Premiere>Pr</Premiere></Task>
        <Space $w={7} />
        <Task $w={40} $line aria-label="录屏"><Ic size={22} box={22}><circle cx="11" cy="11" r="10.300" fill="#000" stroke="#fff" strokeWidth="1.400" /><circle cx="11" cy="11" r="6" fill="#f0282d" stroke="none" /></Ic></Task>
        <Clock>7:58<br />2022/5/27</Clock>
      </Taskbar>

      <Pointer>
        <Ic size={17}><path d="M.5.5v15l3.500-3 2 5 3-1.500-2-4.500h4.500z" fill="#b400e0" stroke="#000" /></Ic>
      </Pointer>
      <Caption>对于题目题量非常大的</Caption>
    </Screen>
  );
}
